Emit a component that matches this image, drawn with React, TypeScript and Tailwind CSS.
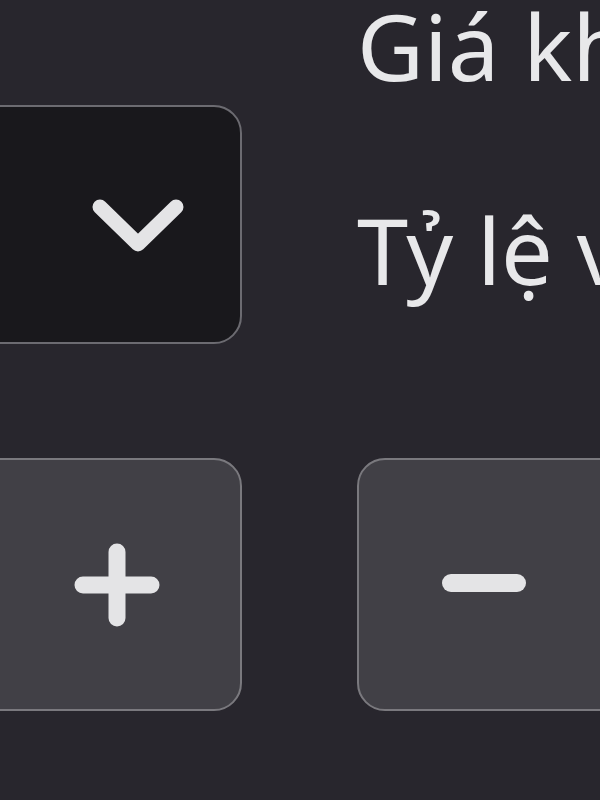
const Chevron = () => (
    <svg width="100" height="60" viewBox="0 0 100 60" fill="none">
        <polyline
            points="12,12 50,49 88,12"
            stroke="#e4e4e6"
            strokeWidth="15"
            strokeLinecap="round"
            strokeLinejoin="round"
        />
    </svg>
);

const Plus = () => (
    <svg width="90" height="84" viewBox="0 0 90 84" fill="none">
        <path
            d="M11 42H79M45 9V75"
            stroke="#e4e4e6"
            strokeWidth="17"
            strokeLinecap="round"
        />
    </svg>
);

const Minus = () => (
    <svg width="90" height="20" viewBox="0 0 90 20" fill="none">
        <path d="M12 10H78" stroke="#e4e4e6" strokeWidth="18" strokeLinecap="round" />
    </svg>
);

export default function App() {
    return (
        <div
            className="h-[800px] w-[600px] overflow-hidden bg-[#28262d] text-[#e8e8ea]"
            style={{ fontFamily: '"Noto Sans", sans-serif' }}
        >
            <div className="flex h-[458px] gap-[115px]">
                <div className="ml-[-120px] mt-[105px] h-[239px] w-[362px] shrink-0 rounded-[28px] border-2 border-[#6c6b71] bg-[#19181c]">
                    <div className="flex h-full items-center justify-end pr-[52px]">
                        <Chevron />
                    </div>
                </div>
                <div className="flex flex-col gap-[114px] pt-[1px] text-[92px] leading-[90px] whitespace-nowrap">
                    <span>Giá khởi điểm</span>
                    <span>Tỷ lệ vượt giá</span>
                </div>
            </div>
            <div className="flex gap-[115px]">
                <button className="ml-[-120px] flex h-[253px] w-[362px] shrink-0 items-center justify-end rounded-[28px] border-2 border-[#7a797e] bg-[#414046] pr-[78px]">
                    <Plus />
                </button>
                <button className="flex h-[253px] w-[362px] shrink-0 items-center rounded-[28px] border-2 border-[#7a797e] bg-[#414046] pl-[80px] pb-[4px]">
                    <Minus />
                </button>
            </div>
        </div>
    );
}
